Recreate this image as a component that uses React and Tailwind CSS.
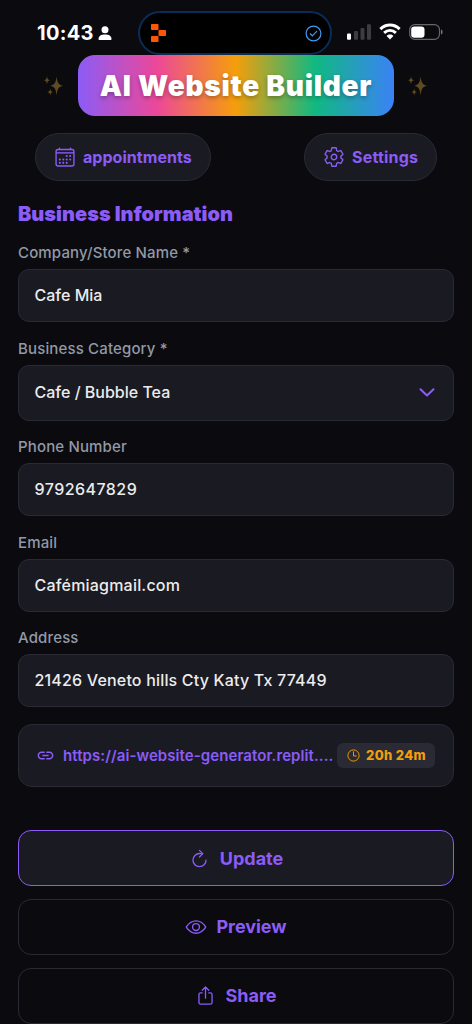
import React from "react";
import {
  IoCalendarOutline,
  IoSettingsOutline,
  IoRefreshOutline,
  IoEyeOutline,
  IoShareOutline,
  IoTimeOutline,
} from "react-icons/io5";
import { MdLink } from "react-icons/md";

function StatusBar() {
  return (
    <div className="flex h-[55px] shrink-0 items-start pt-[11px]">
      <div className="flex h-[44px] w-[138px] items-center pl-[37px]">
        <span className="text-[20px] font-bold leading-none tracking-[0.3px]">10:43</span>
        <svg className="ml-[4px] h-[15px] w-[14px]" viewBox="0 0 14 15" fill="white">
          <circle cx="7" cy="3.8" r="3.5" />
          <path d="M0.5 12.9C0.5 10.1 3.2 8.6 7 8.6s6.5 1.5 6.5 4.3c0 .8-.4 1.1-1.1 1.1H1.6c-.7 0-1.1-.3-1.1-1.1z" />
        </svg>
      </div>
      <div className="flex h-[44px] w-[194px] items-center justify-between rounded-full border-2 border-[#092d56] bg-black pl-[11px] pr-[8px]">
        <svg className="h-[18px] w-[15px]" viewBox="0 0 15 18" fill="#ff5506">
          <rect x="0" y="0" width="7.5" height="6" rx="0.8" />
          <rect x="7.5" y="6" width="7.5" height="6" rx="0.8" />
          <rect x="0" y="12" width="7.5" height="6" rx="0.8" />
        </svg>
        <svg className="h-[17px] w-[17px]" viewBox="0 0 17 17" fill="none" stroke="#4397ed" strokeWidth="1.2">
          <circle cx="8.5" cy="8.5" r="7.4" />
          <path d="M5.3 8.8l2.1 2 4.3-4.4" strokeLinecap="round" strokeLinejoin="round" />
        </svg>
      </div>
      <svg className="ml-[15px] mt-[13px] h-[16px] w-[24px]" viewBox="0 0 24 16">
        <rect x="0" y="9.5" width="4" height="6.3" rx="1" fill="white" />
        <rect x="7" y="7" width="4" height="8.8" rx="1" fill="#3d3d41" />
        <rect x="13.5" y="4" width="4" height="11.8" rx="1" fill="#3d3d41" />
        <rect x="20" y="0.3" width="4" height="15.5" rx="1" fill="#3d3d41" />
      </svg>
      <svg className="ml-[8px] mt-[12px] h-[17px] w-[22px]" viewBox="0 0 22 17" fill="none" stroke="white">
        <path d="M1.4 6.1C6.9 0.7 15.1 0.7 20.6 6.1" strokeWidth="3" />
        <path d="M5.1 9.9c3.5-3.2 8.3-3.2 11.8 0" strokeWidth="2.9" />
        <path d="M7.6 12.9c1.9-1.9 4.9-1.9 6.8 0L11 16.4z" fill="white" stroke="none" />
      </svg>
      <svg className="ml-[8px] mt-[13px] h-[16px] w-[34px]" viewBox="0 0 34 16">
        <rect x="0.7" y="0.7" width="29.8" height="14.6" rx="5" fill="none" stroke="#67676a" strokeWidth="1.2" />
        <rect x="2.2" y="2.4" width="13.3" height="11.3" rx="3.2" fill="white" />
        <path d="M32 5.5c1.2.4 1.6 1.4 1.6 2.5s-.4 2.1-1.6 2.5z" fill="#77777a" />
      </svg>
    </div>
  );
}

function Sparkles() {
  return (
    <svg className="h-[22px] w-[20px] shrink-0" viewBox="0 0 20 22" fill="#5e4b20">
      <path d="M12.6 1.2C13.3 7.4 14.4 9.8 19.2 10.8C14.4 11.8 13.3 14.2 12.6 20.4C11.9 14.2 10.8 11.8 6 10.8C10.8 9.8 11.9 7.4 12.6 1.2z" />
      <path d="M3 1C3.3 3.9 3.9 4.8 6 5.3C3.9 5.8 3.3 6.7 3 9.6C2.7 6.7 2.1 5.8 0 5.3C2.1 4.8 2.7 3.9 3 1z" />
      <path d="M6.2 13.2C6.5 15.8 7.1 16.6 9.2 17C7.1 17.4 6.5 18.2 6.2 20.8C5.9 18.2 5.3 17.4 3.2 17C5.3 16.6 5.9 15.8 6.2 13.2z" />
    </svg>
  );
}

function Field({ label, value, select, tracking = "tracking-[0px]" }) {
  return (
    <label className="block">
      <span className="block h-[26px] text-[15px] font-medium leading-[20px] tracking-[0.15px] text-[#9299a6]">
        {label}
      </span>
      <span
        className={
          "flex items-center justify-between rounded-[11px] border border-[#2a2a35] bg-[#1a1a23] pb-[1px] pl-[15.5px] pr-[18px] text-[16px] font-medium text-[#ececec] " +
          (select ? "h-[56px]" : "h-[53px]")
        }
      >
        <span className={tracking}>{value}</span>
        {select && (
          <svg className="h-[9px] w-[16px]" viewBox="0 0 16 9" fill="none" stroke="#8b5cf6" strokeWidth="2" strokeLinecap="round" strokeLinejoin="round">
            <path d="M1.5 1.2L8 7.5L14.5 1.2" />
          </svg>
        )}
      </span>
    </label>
  );
}

export default function App() {
  return (
    <div className="flex h-[1024px] w-[472px] flex-col overflow-hidden bg-[#0a0a0f] font-['Inter',sans-serif] text-white">
      <StatusBar />
      <header className="flex h-[61px] shrink-0 items-center justify-center gap-[14px]">
        <Sparkles />
        <h1 className="flex h-[61px] w-[316px] items-center justify-center whitespace-nowrap rounded-[17px] bg-[linear-gradient(90deg,#8b5cf6_0%,#ec4899_25%,#f59e0b_50%,#10b981_75%,#3b82f6_100%)] text-[28px] font-black tracking-[0.75px] [text-shadow:0_2px_4px_rgba(0,0,0,0.3)]">
          AI Website Builder
        </h1>
        <Sparkles />
      </header>
      <nav className="mt-[17px] flex shrink-0 justify-between px-[35px] text-[16px] font-bold text-[#8b5cf6]">
        <button className="flex h-[48px] w-[176px] items-center rounded-full border border-[#2a2a35] bg-[#1a1a23] pb-[1px] pl-[18px]">
          <IoCalendarOutline className="mr-[7px] size-[22px]" />
          <span className="tracking-[0.05px]">appointments</span>
        </button>
        <button className="flex h-[48px] w-[133px] items-center rounded-full border border-[#2a2a35] bg-[#1a1a23] pb-[1px] pl-[18px]">
          <IoSettingsOutline className="mr-[7px] size-[22px]" />
          <span className="tracking-[0.2px]">Settings</span>
        </button>
      </nav>
      <main className="flex flex-col px-[18px]">
        <h2 className="mt-[19px] h-[43px] text-[20px] font-black leading-[28px] text-[#8b5cf6]">Business Information</h2>
        <div className="flex flex-col gap-[16.5px]">
          <Field label="Company/Store Name *" value="Cafe Mia" />
          <Field label="Business Category *" value="Cafe / Bubble Tea" select />
          <Field label="Phone Number" value="9792647829" tracking="tracking-[0.45px]" />
          <Field label="Email" value="Cafémiagmail.com" tracking="tracking-[0.2px]" />
          <Field label="Address" value="21426 Veneto hills Cty Katy Tx 77449" tracking="tracking-[0.18px]" />
        </div>
        <div className="mt-[17px] flex h-[63px] items-center rounded-[14px] border border-[#2a2a35] bg-[#1a1a23] pl-[17px] pr-[18px]">
          <MdLink className="mr-[8px] size-[19px] shrink-0 text-[#8b5cf6]" />
          <span className="whitespace-nowrap pt-[1px] text-[15px] font-semibold tracking-[0.08px] text-[#8b5cf6]">https://ai-website-generator.replit....</span>
          <span className="ml-auto flex h-[25px] w-[98px] shrink-0 items-center rounded-[6px] bg-[#2a2a35] pl-[9px] text-[13px] font-extrabold text-[#f59e0b]">
            <IoTimeOutline className="mr-[5px] size-[15px]" />
            <span className="whitespace-nowrap tracking-[0.35px]">20h 24m</span>
          </span>
        </div>
        <div className="mt-[43px] flex flex-col gap-[13px] text-[18px] font-bold text-[#8b5cf6]">
          <button className="flex h-[56px] items-center justify-center gap-[10px] rounded-[13px] border border-[#8b5cf6] bg-[#1a1a23]">
            <IoRefreshOutline className="size-[21px]" />
            <span>Update</span>
          </button>
          <button className="flex h-[56px] items-center justify-center gap-[9px] rounded-[13px] border border-[#2a2a35] pb-[1px]">
            <IoEyeOutline className="size-[22px]" />
            <span className="tracking-[-0.05px]">Preview</span>
          </button>
          <button className="flex h-[56px] items-center justify-center gap-[9px] rounded-[13px] border border-[#2a2a35] pb-[2px]">
            <IoShareOutline className="size-[21px]" />
            <span>Share</span>
          </button>
        </div>
      </main>
    </div>
  );
}
